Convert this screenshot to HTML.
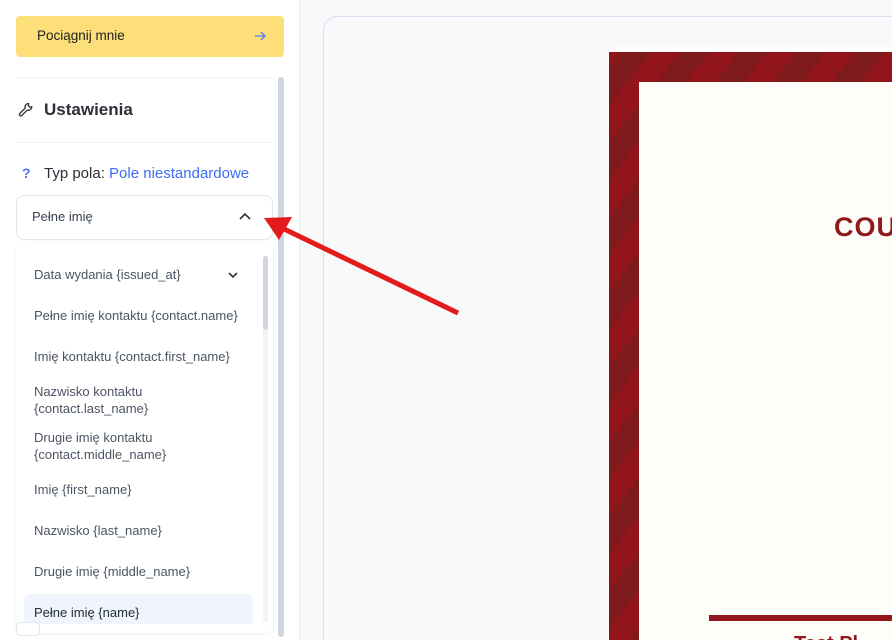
<!DOCTYPE html>
<html style="width:892px;height:640px;overflow:hidden"><head><meta charset="utf-8"><style>
*{box-sizing:border-box;margin:0;padding:0}
body{width:892px;height:640px;overflow:hidden;background:#f8f9fa;font-family:"Liberation Sans",sans-serif;position:relative}
.left{position:absolute;left:0;top:0;width:300px;height:640px;background:#fff;border-right:1px solid #eceef2}
.abs{position:absolute}
.item{position:absolute;left:34px;font-size:13px;color:#4b5563;line-height:17px;white-space:nowrap}
</style></head><body>
<div class="abs" style="left:323px;top:16px;width:600px;height:640px;border:1px solid #dedcef;border-radius:14px;background:#f8f9fa"></div>
<div class="abs" style="left:609px;top:47px;width:283px;height:593px;background:#fff"></div>
<div class="abs" style="left:609px;top:52px;width:283px;height:588px;background:repeating-linear-gradient(-52deg,#7f1a1c 0 23px,#92151b 23px 46px)"></div>
<div class="abs" style="left:639px;top:82px;width:253px;height:558px;background:#fffdf8;overflow:hidden">
  <div class="abs" style="left:195px;top:130px;font-size:27px;font-weight:bold;color:#8e1a1d;letter-spacing:1px;white-space:nowrap">COURSE CERTIFICATE</div>
  <div class="abs" style="left:70px;top:533px;width:200px;height:6px;background:#92151b"></div>
  <div class="abs" style="left:155px;top:551px;font-size:20px;font-weight:bold;color:#8e1a1d;white-space:nowrap">Test Pl</div>
</div>
<div class="left">
  <div class="abs" style="left:16px;top:16px;width:268px;height:41px;background:#fddf7a;border-radius:4px"></div>
  <div class="abs" style="left:37px;top:28px;font-size:13.5px;color:#222">Pociągnij mnie</div>
  <svg class="abs" style="left:253px;top:29px" width="14" height="14" viewBox="0 0 14 14"><path d="M2 7H12M8 3L12 7L8 11" stroke="#4f7df3" stroke-width="1.3" fill="none"/></svg>
  <div class="abs" style="left:16px;top:77px;width:256px;height:1px;background:#eef0f3"></div>
  <svg class="abs" style="left:18px;top:102px" width="16" height="16" viewBox="0 0 16 16"><path d="M10.5 1.5a3.5 3.5 0 0 0-3.3 4.6L1.8 11.5a1.4 1.4 0 0 0 2 2l5.4-5.4a3.5 3.5 0 0 0 4.6-3.3l-2 .4-1.5-1.5.4-2z" stroke="#333" stroke-width="1.3" fill="none" stroke-linejoin="round"/></svg>
  <div class="abs" style="left:44px;top:100px;font-size:17px;font-weight:bold;color:#2b2f36">Ustawienia</div>
  <div class="abs" style="left:16px;top:142px;width:256px;height:1px;background:#eef0f3"></div>
  <div class="abs" style="left:22px;top:165px;font-size:14px;font-weight:bold;color:#4f6ef3">?</div>
  <div class="abs" style="left:44px;top:165px;font-size:15px;color:#2b2f36">Typ pola: <span style="color:#3f6cf5">Pole niestandardowe</span></div>
  <div class="abs" style="left:16px;top:195px;width:257px;height:45px;border:1px solid #e3e5ec;border-radius:8px"></div>
  <div class="abs" style="left:32px;top:209px;font-size:13px;color:#374151">Pełne imię</div>
  <svg class="abs" style="left:238px;top:211px" width="14" height="10" viewBox="0 0 14 10"><path d="M2 8L7 3L12 8" stroke="#333" stroke-width="1.6" fill="none"/></svg>
  <div class="abs" style="left:278px;top:77px;width:6px;height:560px;background:#cfd6e0;border-radius:3px"></div>
  <div class="abs" style="left:16px;top:243px;width:257px;height:390px;background:#fff;border-radius:8px;box-shadow:0 1px 4px rgba(0,0,0,.08)"></div>
  <div class="abs" style="left:263px;top:256px;width:5px;height:366px;background:#f1f3f6;border-radius:3px"></div>
  <div class="abs" style="left:263px;top:256px;width:5px;height:74px;background:#cfd6e0;border-radius:3px"></div>
  <div class="abs" style="left:24px;top:594px;width:229px;height:30px;background:#eff4fd;border-radius:5px 5px 0 0"></div>
  <div class="item" style="top:266px">Data wydania {issued_at}</div>
  <svg class="abs" style="left:227px;top:270px" width="12" height="10" viewBox="0 0 12 10"><path d="M2 3L6 7L10 3" stroke="#333" stroke-width="1.6" fill="none"/></svg>
  <div class="item" style="top:307px">Pełne imię kontaktu {contact.name}</div>
  <div class="item" style="top:348px">Imię kontaktu {contact.first_name}</div>
  <div class="item" style="top:383px">Nazwisko kontaktu<br>{contact.last_name}</div>
  <div class="item" style="top:429px">Drugie imię kontaktu<br>{contact.middle_name}</div>
  <div class="item" style="top:481px">Imię {first_name}</div>
  <div class="item" style="top:522px">Nazwisko {last_name}</div>
  <div class="item" style="top:563px">Drugie imię {middle_name}</div>
  <div class="item" style="top:604px;color:#1f2937">Pełne imię {name}</div>
  <div class="abs" style="left:16px;top:622px;width:24px;height:14px;border:1px solid #e3e5ec;border-radius:5px;background:#fff"></div>
</div>
<svg class="abs" style="left:0;top:0" width="892" height="640"><line x1="458" y1="313" x2="282" y2="228" stroke="#e31b1b" stroke-width="5"/><polygon points="264,218 292,217 279,240" fill="#e31b1b"/></svg>
</body></html>
